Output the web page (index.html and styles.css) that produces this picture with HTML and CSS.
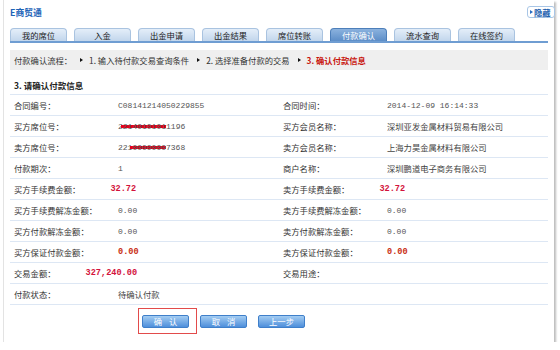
FILE: index.html
```html
<!DOCTYPE html>
<html lang="zh-CN">
<head>
<meta charset="utf-8">
<title>E商贸通 - 付款确认</title>
<link rel="stylesheet" href="styles.css">
</head>
<body>
<div class="panel">
  <div class="top">
    <div class="brand">E商贸通</div>
    <button class="hide"><span class="tri-blue"></span>隐藏</button>
  </div>
  <ul class="tabs">
    <li class="tab">我的席位</li>
    <li class="tab">入金</li>
    <li class="tab">出金申请</li>
    <li class="tab">出金结果</li>
    <li class="tab">席位转账</li>
    <li class="tab active">付款确认</li>
    <li class="tab">流水查询</li>
    <li class="tab">在线签约</li>
  </ul>
  <div class="crumb">
    <span>付款确认流程：</span>
    <span class="tri"></span><span>1. 输入待付款交易查询条件</span>
    <span class="tri"></span><span>2. 选择准备付款的交易</span>
    <span class="tri"></span><span class="cur">3. 确认付款信息</span>
  </div>
  <h3 class="sec">3. 请确认付款信息</h3>
  <div class="grid">
    <div class="cell"><span class="lbl">合同编号：</span><span class="val num">C08141214050229855</span></div>
    <div class="cell"><span class="lbl">合同时间：</span><span class="val num">2014-12-09 16:14:33</span></div>

    <div class="cell"><span class="lbl">买方席位号：</span><span class="val num">2<span class="redact r1">214010101</span>1196</span></div>
    <div class="cell"><span class="lbl">买方会员名称：</span><span class="val">深圳亚发金属材料贸易有限公司</span></div>

    <div class="cell"><span class="lbl">卖方席位号：</span><span class="val num">221<span class="redact">0000000</span>7368</span></div>
    <div class="cell"><span class="lbl">卖方会员名称：</span><span class="val">上海力昊金属材料有限公司</span></div>

    <div class="cell"><span class="lbl">付款期次：</span><span class="val num">1</span></div>
    <div class="cell"><span class="lbl">商户名称：</span><span class="val">深圳鹏道电子商务有限公司</span></div>

    <div class="cell inline"><span class="lbl">买方手续费金额：</span><span class="val amt">32.72</span></div>
    <div class="cell inline"><span class="lbl">卖方手续费金额：</span><span class="val amt">32.72</span></div>

    <div class="cell"><span class="lbl">买方手续费解冻金额：</span><span class="val num">0.00</span></div>
    <div class="cell"><span class="lbl">卖方手续费解冻金额：</span><span class="val num">0.00</span></div>

    <div class="cell"><span class="lbl">买方付款解冻金额：</span><span class="val num">0.00</span></div>
    <div class="cell"><span class="lbl">卖方付款解冻金额：</span><span class="val num">0.00</span></div>

    <div class="cell"><span class="lbl">买方保证付款金额：</span><span class="val amt deposit">0.00</span></div>
    <div class="cell"><span class="lbl">卖方保证付款金额：</span><span class="val amt deposit">0.00</span></div>

    <div class="cell inline"><span class="lbl">交易金额：</span><span class="val amt">327,240.00</span></div>
    <div class="cell"><span class="lbl">交易用途：</span><span class="val"></span></div>

    <div class="cell"><span class="lbl">付款状态：</span><span class="val">待确认付款</span></div>
    <div class="cell"></div>
  </div>
  <div class="actions">
    <span class="focus"><button class="btn">确 认</button></span>
    <button class="btn">取 消</button>
    <button class="btn">上一步</button>
  </div>
</div>
</body>
</html>
```
FILE: styles.css
```css
* { box-sizing: border-box; }
html, body { margin: 0; background: #fff; }
body {
  font-family: "Noto Sans CJK SC", "Noto Sans", sans-serif;
  font-size: 8.3px;
  color: #333;
}
.panel {
  margin-left: 3px;
  width: 551px;
  height: 342px;
  border-left: 1px solid #e3e3e3;
  box-shadow: 2px 2px 2px #bdbdbd;
  padding: 0 6px;
  background: #fff;
}
.top {
  height: 28px;
  display: flex;
  justify-content: space-between;
  align-items: flex-start;
}
.brand {
  margin-top: 7px;
  line-height: 11px;
  font-weight: bold;
  font-size: 8.8px;
  color: #1d63b7;
}
.hide {
  margin-top: 6px;
  margin-right: -7px;
  height: 12px;
  width: 28px;
  border: 1px solid #a9c6e6;
  border-radius: 3px;
  background: #fff;
  color: #1d5fae;
  font-family: inherit;
  font-weight: bold;
  font-size: 8.3px;
  line-height: 10px;
  display: flex;
  align-items: center;
  gap: 1px;
  padding: 0 2px;
}
.tri-blue {
  width: 0; height: 0;
  border-left: 3px solid #2a6cc0;
  border-top: 2px solid transparent;
  border-bottom: 2px solid transparent;
}
.tabs {
  display: flex;
  gap: 7px;
  margin: 0;
  padding: 0;
  list-style: none;
  border-bottom: 2px solid #6f9dd2;
  height: 15px;
}
.tab {
  width: 57px;
  height: 13px;
  line-height: 12px;
  text-align: center;
  border: 1px solid #a9c3e0;
  border-bottom: 0;
  border-radius: 4px 4px 0 0;
  background: linear-gradient(#e4eef9, #c2d6ec);
  color: #1e1e1e;
}
.tab.active {
  background: linear-gradient(#8bb2de, #5d8ec8);
  border-color: #4d7fba;
  color: #fff;
}
.crumb {
  margin-top: 7px;
  height: 20px;
  background: #efefef;
  padding-left: 4px;
  display: flex;
  align-items: center;
  gap: 5px;
  color: #333;
}
.tri {
  width: 0; height: 0;
  margin: 0 1px 0 3px;
  border-left: 3px solid #111;
  border-top: 2.5px solid transparent;
  border-bottom: 2.5px solid transparent;
}
.crumb .cur { color: #c8160e; font-weight: bold; }
.sec {
  margin: 0;
  height: 24px;
  padding: 8px 0 0 4px;
  line-height: 14px;
  font-size: 8.5px;
  font-weight: bold;
  color: #222;
}
.grid {
  display: grid;
  grid-template-columns: 269px 269px;
  border-top: 1px solid #dde7f4;
}
.cell {
  height: 21px;
  border-bottom: 1px solid #dde7f4;
  display: flex;
  align-items: center;
  padding-left: 4px;
  white-space: nowrap;
}
.lbl { width: 104px; flex: none; color: #333; }
.val { color: #444; }
.cell.inline .lbl { width: auto; }
.cell.inline .val { margin-left: 30px; }
.num {
  font-family: "Liberation Mono", monospace;
  font-size: 8px;
  color: #555;
}
.amt {
  font-family: "Liberation Mono", monospace;
  font-size: 8.6px;
  font-weight: bold;
  color: #d3123c;
}
.amt.deposit { color: #c92d12; }
.redact {
  background: linear-gradient(#e6001a, #e6001a) no-repeat center / 100% 3px;
  padding-left: 2px;
  margin-left: -2px;
}
.redact.r1 { padding-left: 2px; margin-left: -2px; }
.actions {
  padding: 10px 0 0 132px;
  display: flex;
  gap: 11px;
}
.focus { position: relative; display: flex; }
.focus::after {
  content: "";
  position: absolute;
  left: -4px; right: -8px; top: -7px; bottom: -6px;
  border: 1px solid #e24b4b;
}
.btn {
  width: 47px;
  height: 13px;
  padding: 0;
  border: 1px solid #3f7fca;
  border-radius: 2px;
  background: linear-gradient(#a3ccf2, #4e8fdb);
  color: #fff;
  font-family: inherit;
  font-size: 8.3px;
  line-height: 11px;
  word-spacing: 5px;
}
```
